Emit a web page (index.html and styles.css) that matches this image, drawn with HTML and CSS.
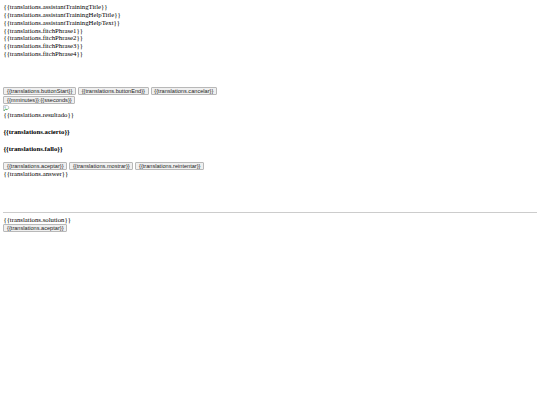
FILE: index.html
```html
<!DOCTYPE html>
<html>
<head>
<meta charset="utf-8">
<link rel="stylesheet" href="styles.css">
</head>
<body class="page">
<div class="line">{{translations.assistantTrainingTitle}}</div>
<div class="line">{{translations.assistantTrainingHelpTitle}}</div>
<div class="line">{{translations.assistantTrainingHelpText}}</div>
<div class="line">{{translations.fitchPhrase1}}</div>
<div class="line">{{translations.fitchPhrase2}}</div>
<div class="line">{{translations.fitchPhrase3}}</div>
<div class="line">{{translations.fitchPhrase4}}</div>
<div class="spacer-top"></div>
<div class="btn-row">
<button class="btn">{{translations.buttonStart}}</button>
<button class="btn">{{translations.buttonEnd}}</button>
<button class="btn">{{translations.cancelar}}</button>
</div>
<div class="btn-row">
<button class="btn">{{mminutes}}:{{sseconds}}</button>
</div>
<svg class="broken" width="7" height="7" viewBox="0 0 16 16"><path d="M1.5 14.5v-13h9l3 3v4" fill="none" stroke="#a0a0a0" stroke-width="1.5"/><path d="M2.5 14l4-5 2.5 2.5 3-3" fill="none" stroke="#3fa34d" stroke-width="2.2"/><circle cx="5" cy="5" r="1.6" fill="#5aa0d8"/></svg>
<div class="line">{{translations.resultado}}</div>
<h4 class="status">{{translations.acierto}}</h4>
<h4 class="status">{{translations.fallo}}</h4>
<div class="btn-row">
<button class="btn">{{translations.aceptar}}</button>
<button class="btn">{{translations.mostrar}}</button>
<button class="btn">{{translations.reintentar}}</button>
</div>
<div class="line">{{translations.answer}}</div>
<div class="spacer-mid"></div>
<hr class="rule">
<div class="line">{{translations.solution}}</div>
<div class="btn-row">
<button class="btn">{{translations.aceptar}}</button>
</div>
</body>
</html>
```
FILE: styles.css
```css
html {
  background: #ffffff;
}
.page {
  margin: 3.4px;
  font-family: "Liberation Serif", "Times New Roman", serif;
  font-size: 6.75px;
  color: #000000;
}
.line {
  line-height: 7.76px;
  height: 7.76px;
  white-space: nowrap;
}
.spacer-top {
  height: 29.4px;
}
.btn-row {
  display: flex;
  align-items: flex-start;
  gap: 2px;
  height: 8.8px;
}
.btn {
  font-family: "Liberation Sans", Arial, sans-serif;
  font-size: 5.625px;
  line-height: 6.4px;
  height: 8.1px;
  color: #222222;
  background: #f0f0f0;
  border: 0.6px solid #b8b8b8;
  border-radius: 1px;
  padding: 0 2.7px;
  margin: 0;
  white-space: nowrap;
}
.broken {
  display: block;
  width: 6.75px;
  height: 6.75px;
}
.status {
  font-size: 6.75px;
  font-weight: bold;
  margin: 9px 0;
  line-height: 7.76px;
  height: 7.76px;
}
.spacer-mid {
  height: 30.4px;
}
.rule {
  margin: 3.4px 0;
  height: 0;
  border: none;
  border-top: 1px solid #cccccc;
}
```
